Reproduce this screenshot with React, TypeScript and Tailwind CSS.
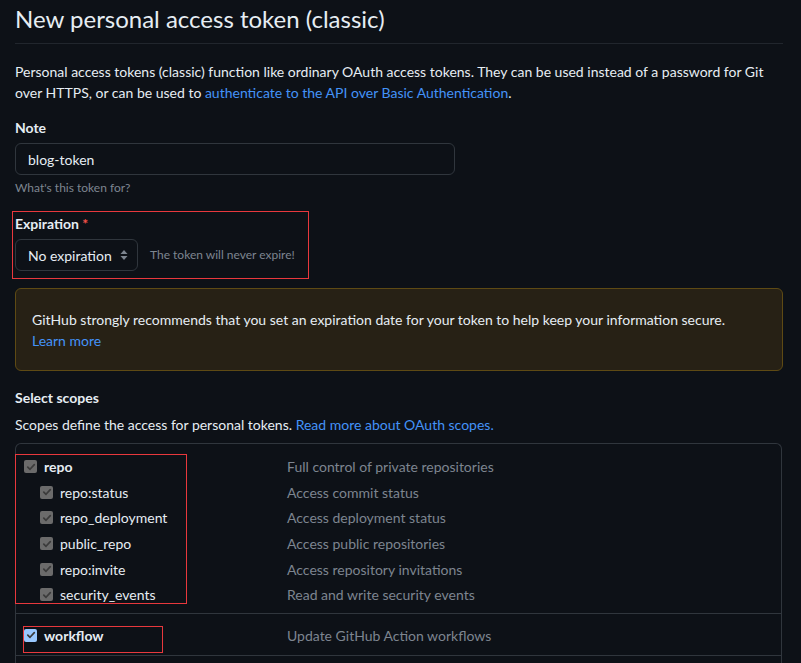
const font = { fontFamily: 'Lato, "Noto Sans", sans-serif' };

function Check({ tone }: { tone: 'gray' | 'blue' }) {
  return (
    <span
      className={`flex h-[13px] w-[13px] shrink-0 items-center justify-center rounded-[2px] ${
        tone === 'blue' ? 'bg-[#99c8ff]' : 'bg-[#6b6b6b]'
      }`}
    >
      <svg width="10" height="10" viewBox="0 0 10 10" fill="none">
        <path d="M1.8 5.2L4 7.3L8.3 2.6" stroke="#3b3b3b" strokeWidth="1.7" strokeLinecap="round" strokeLinejoin="round" />
      </svg>
    </span>
  );
}

const subScopes = [
  ['repo:status', 'Access commit status'],
  ['repo_deployment', 'Access deployment status'],
  ['public_repo', 'Access public repositories'],
  ['repo:invite', 'Access repository invitations'],
  ['security_events', 'Read and write security events'],
];

export default function App() {
  return (
    <div className="min-h-screen bg-[#0d1117] px-[15px] text-[#e6edf3]" style={font}>
      <div className="w-[768px]">
        <h1 className="border-b border-[#21262d] pt-[1px] pb-[6px] text-[24px] leading-[36px] font-normal">
          New personal access token (classic)
        </h1>

        <div className="mt-[18px] text-[14px] leading-[20.5px]">
          <div>Personal access tokens (classic) function like ordinary OAuth access tokens. They can be used instead of a password for Git</div>
          <div>
            over HTTPS, or can be used to <a className="text-[#4493f8]">authenticate to the API over Basic Authentication</a>.
          </div>
        </div>

        <div className="mt-[14px] text-[14px] leading-[21px] font-bold">Note</div>
        <div className="mt-[5px] flex h-[32px] w-[440px] items-center rounded-[6px] border border-[#30363d] px-[12px] text-[14px]">
          blog-token
        </div>
        <div className="mt-[4px] text-[12px] leading-[18px] text-[#7d8590]">What's this token for?</div>

        {/* Expiration, with the red annotation frame */}
        <div className="relative mt-[16px]">
          <div className="pointer-events-none absolute -top-[2px] -left-[3px] h-[68px] w-[297px] border border-[#e8383d]" />
          <div className="text-[14px] leading-[21px] font-bold">
            Expiration <span className="text-[#f85149]">*</span>
          </div>
          <div className="mt-[5px] flex items-center gap-[12px]">
            <div className="flex h-[32px] w-[123px] items-center justify-between rounded-[6px] border border-[#30363d] bg-[#0d1117] pl-[12px] pr-[8px] text-[14px]">
              <span>No expiration</span>
              <svg width="10" height="14" viewBox="0 0 10 14">
                <path d="M5 2L8.5 6H1.5Z" fill="#7d8590" />
                <path d="M5 12L8.5 8H1.5Z" fill="#7d8590" />
              </svg>
            </div>
            <span className="text-[12px] text-[#7d8590]">The token will never expire!</span>
          </div>
        </div>

        <div className="mt-[17px] rounded-[6px] border border-[#5e4a14] bg-[#272115] px-[16px] pt-[21px] pb-[19px] text-[14px] leading-[20.5px]">
          <div>GitHub strongly recommends that you set an expiration date for your token to help keep your information secure.</div>
          <a className="text-[#4493f8]">Learn more</a>
        </div>

        <div className="mt-[16px] text-[14px] leading-[21px] font-bold">Select scopes</div>
        <div className="mt-[6px] text-[14px] leading-[21px]">
          Scopes define the access for personal tokens. <a className="text-[#4493f8]">Read more about OAuth scopes.</a>
        </div>

        <div className="mt-[8px] w-[767px] rounded-t-[6px] border border-b-0 border-[#30363d] text-[14px]">
          <div className="relative pt-[10px] pb-[5px]">
            <div className="pointer-events-none absolute top-[10px] -left-[1px] h-[150px] w-[172px] border border-[#e8383d]" />
            <div className="grid h-[25.6px] grid-cols-[271px_1fr] items-center">
              <label className="flex items-center gap-[7px] pl-[8px] font-bold">
                <Check tone="gray" />
                repo
              </label>
              <span className="text-[#7d8590]">Full control of private repositories</span>
            </div>
            {subScopes.map(([name, desc]) => (
              <div key={name} className="grid h-[25.6px] grid-cols-[271px_1fr] items-center">
                <label className="flex items-center gap-[7px] pl-[24px]">
                  <Check tone="gray" />
                  {name}
                </label>
                <span className="text-[#7d8590]">{desc}</span>
              </div>
            ))}
          </div>
          <div className="relative border-t border-b border-[#30363d] pt-[9px] pb-[6.5px]">
            <div className="pointer-events-none absolute top-[12px] left-[7px] h-[27px] w-[140px] border border-[#e8383d]" />
            <div className="grid h-[25.6px] grid-cols-[271px_1fr] items-center">
              <label className="flex items-center gap-[7px] pl-[8px] font-bold">
                <Check tone="blue" />
                workflow
              </label>
              <span className="text-[#7d8590]">Update GitHub Action workflows</span>
            </div>
          </div>
          <div className="h-[20px]" />
        </div>
      </div>
    </div>
  );
}
